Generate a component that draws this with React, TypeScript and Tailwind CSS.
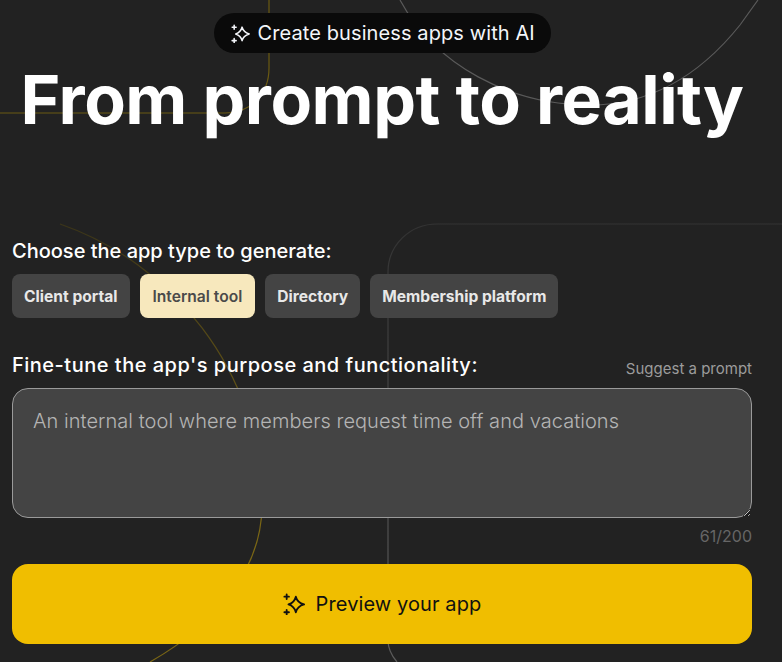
import type { FC } from 'react'

const chips = ['Client portal', 'Internal tool', 'Directory', 'Membership platform']

const Sparkle: FC<{ className?: string }> = ({ className }) => (
  <svg viewBox="0 0 24 24" fill="none" stroke="currentColor" strokeWidth="2" strokeLinejoin="round" strokeLinecap="round" className={className}>
    <path d="M14 4 Q15.6 10.4 23 12.5 Q15.6 14.6 14 21 Q12.4 14.6 6 12.5 Q12.4 10.4 14 4Z" />
    <path d="M4 1.5V6.5M1.5 4H6.5M4 18.5V23.5M1.5 21H6.5" />
  </svg>
)

const Backdrop: FC = () => (
  <svg viewBox="0 0 782 662" fill="none" className="absolute inset-0 h-[662px] w-[782px]">
    <defs>
      <linearGradient id="fade" x1="0" y1="224" x2="0" y2="662" gradientUnits="userSpaceOnUse">
        <stop offset="0" stopColor="#333333" />
        <stop offset="1" stopColor="#5c5c5c" />
      </linearGradient>
      <linearGradient id="gold" x1="0" y1="220" x2="0" y2="500" gradientUnits="userSpaceOnUse">
        <stop offset="0" stopColor="#3a3418" />
        <stop offset="1" stopColor="#7a6614" />
      </linearGradient>
    </defs>
    <path d="M0 113H225C250 113 269 95 269 68V0" stroke="#6b5a12" strokeWidth="1.2" />
    <path d="M60 224C170 262 262 370 262 505C262 570 215 625 150 662" stroke="url(#gold)" strokeWidth="1.2" />
    <path d="M400 0C435 65 510 105 590 105C650 105 700 75 740 25L758 0" stroke="#5a5a5a" strokeWidth="1.2" />
    <path d="M397 662C391 655 388 648 388 640V272C388 245 410 224 437 224H782" stroke="url(#fade)" strokeWidth="1.2" />
  </svg>
)

const App: FC = () => {
  return (
    <div className="relative h-[662px] w-[782px] overflow-hidden bg-[#222222] font-['Inter',sans-serif] text-white">
      <Backdrop />
      <div className="relative flex w-[763px] flex-col pl-3 pr-[11px] pt-[13px]">
        <div className="flex flex-col items-center">
          <div className="flex h-10 w-[337px] items-center gap-2 rounded-full bg-[#0a0a0a] pl-[17px] text-[20px] tracking-[0.1px] text-[#f4f6fa]">
            <Sparkle className="h-[19px] w-[19px]" />
            <span>Create business apps with AI</span>
          </div>
          <h1 className="whitespace-nowrap text-[68px] font-bold leading-[92px] tracking-[-0.5px]">From prompt to reality</h1>
        </div>

        <div className="mt-[92px] text-[20px] font-medium leading-7">Choose the app type to generate:</div>
        <div className="mt-[9px] flex gap-[10px]">
          {chips.map((chip) => (
            <button
              key={chip}
              className={
                chip === 'Internal tool'
                  ? 'h-11 rounded-lg bg-[#f7e8bd] px-[13px] pt-px text-[15.6px] font-semibold text-[#4a4a4a]'
                  : 'h-11 rounded-lg bg-[#444444] px-3 pt-px text-[15.6px] font-bold text-[#e8e8e8]'
              }
            >
              {chip}
            </button>
          ))}
        </div>

        <div className="mt-[33px] flex items-end justify-between">
          <div className="text-[20px] font-medium leading-7 tracking-[0.5px]">Fine-tune the app's purpose and functionality:</div>
          <button className="text-[15px] leading-5 text-[#9c9c9c]">Suggest a prompt</button>
        </div>
        <textarea
          className="mt-[9px] h-[130px] w-full rounded-2xl border border-[#9a9a9a] bg-[#444444] px-5 pb-[18px] pt-[17px] text-[20px] font-light leading-[30px] tracking-[0.05px] placeholder:text-[#b4b4b4]"
          placeholder="An internal tool where members request time off and vacations"
        />
        <div className="mt-2 text-right text-[16px] leading-5 text-[#666666]">61/200</div>
        <button className="mt-[18px] flex h-20 items-center justify-center gap-[11px] rounded-2xl bg-[#f0be00] text-[20px] tracking-[0.1px] text-[#111111]">
          <Sparkle className="h-[22px] w-[22px]" />
          <span>Preview your app</span>
        </button>
      </div>
    </div>
  )
}

export default App
